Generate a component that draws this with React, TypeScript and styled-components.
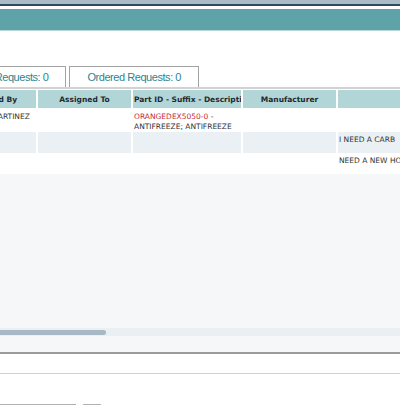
import React from "react";
import styled, { createGlobalStyle } from "styled-components";

const GlobalStyle = createGlobalStyle`
  html, body {
    margin: 0;
    padding: 0;
    background: #fff;
    overflow: hidden;
  }
`;

const Page = styled.div`
  width: 400px;
  height: 405px;
  overflow: hidden;
  background: #fff;
  font-family: "DejaVu Sans", Verdana, sans-serif;
`;

const TopStrip = styled.div`
  height: 4px;
  background: #a9bcc7;
  border-bottom: 2px solid #2e4c5c;
`;

const Banner = styled.div`
  height: 21px;
  margin-top: 3px;
  background: #5ea3a8;
  border-bottom: 1px solid #b8d7d9;
`;

const Shifted = styled.div`
  margin-left: -60px;
  margin-top: 35px;
`;

const TabRow = styled.div`
  display: flex;
  align-items: flex-end;
  gap: 3px;
  padding-left: 9px;
  border-bottom: 2px solid #d2d2d2;
`;

const Tab = styled.div`
  height: 21px;
  box-sizing: border-box;
  padding: 0 17px;
  display: flex;
  align-items: center;
  border: 1px solid #a3a3a3;
  border-bottom: none;
  background: #fff;
  color: #2b8590;
  font-family: "Liberation Sans", Arial, sans-serif;
  font-size: 11px;
  letter-spacing: -0.45px;
  white-space: nowrap;
`;

const TableArea = styled.div`
  height: 262px;
  margin-top: 1px;
  display: flex;
  flex-direction: column;
  background: #f5f7f9;
  border-bottom: 2px solid #9b9b9b;
`;

const Grid = styled.div`
  display: grid;
  grid-template-columns: 96px 93px 108px 93px 220px;
  column-gap: 2px;
  background: #fff;
`;

const HeadCell = styled.div`
  height: 18px;
  margin-bottom: 1px;
  padding: 0 1px;
  display: flex;
  align-items: center;
  justify-content: safe center;
  background: #b2d5d7;
  color: #1e2a2e;
  font-weight: bold;
  font-size: 7.5px;
  white-space: nowrap;
  overflow: hidden;
`;

const Cell = styled.div<{ $shaded?: boolean }>`
  min-height: 21px;
  box-sizing: border-box;
  padding: 3px 1px 0 1px;
  background: ${(p) => (p.$shaded ? "#eaf0f3" : "#fff")};
  color: #333;
  font-size: 7.5px;
  line-height: 10px;
  white-space: nowrap;
  overflow: hidden;
`;

const PartId = styled.span`
  color: #c22d3b;
`;

const Filler = styled.div`
  flex: 1;
`;

const ScrollTrack = styled.div`
  height: 8px;
  margin: 0 0 16px 60px;
  display: flex;
  align-items: center;
  background: #e9eff3;
`;

const ScrollThumb = styled.div`
  width: 106px;
  height: 5px;
  border-radius: 0 3px 3px 0;
  background: #a7b9c4;
`;

const Divider = styled.div`
  height: 1px;
  margin-top: 19px;
  background: #d2d2d2;
`;

const FooterRow = styled.div`
  display: flex;
  gap: 7px;
  margin-top: 30px;
`;

const Field = styled.div<{ $w: number }>`
  width: ${(p) => p.$w}px;
  height: 20px;
  border: 1px solid #b1b1b1;
  box-sizing: border-box;
`;

const rows = [
  {
    shaded: false,
    cells: [
      "FRANCISCO J MARTINEZ",
      "",
      <>
        <PartId>ORANGEDEX5050-0</PartId> -<br />
        ANTIFREEZE; ANTIFREEZE
      </>,
      "",
      "",
    ],
  },
  { shaded: true, cells: ["", "", "", "", "I NEED A CARB"] },
  { shaded: false, cells: ["", "", "", "", "NEED A NEW HOSE"] },
];

const headers = [
  "Requested By",
  "Assigned To",
  "Part ID - Suffix - Description",
  "Manufacturer",
  "",
];

export default function App() {
  return (
    <Page>
      <GlobalStyle />
      <TopStrip />
      <Banner />
      <Shifted>
        <TabRow>
          <Tab>Open Requests: 0</Tab>
          <Tab>Ordered Requests: 0</Tab>
        </TabRow>
        <TableArea>
          <Grid>
            {headers.map((h, i) => (
              <HeadCell key={i}>{h}</HeadCell>
            ))}
            {rows.map((r, ri) =>
              r.cells.map((c, ci) => (
                <Cell key={`${ri}-${ci}`} $shaded={r.shaded}>
                  {c}
                </Cell>
              ))
            )}
          </Grid>
          <Filler />
          <ScrollTrack>
            <ScrollThumb />
          </ScrollTrack>
        </TableArea>
      </Shifted>
      <Divider />
      <FooterRow>
        <Field $w={76} />
        <Field $w={18} />
      </FooterRow>
    </Page>
  );
}
